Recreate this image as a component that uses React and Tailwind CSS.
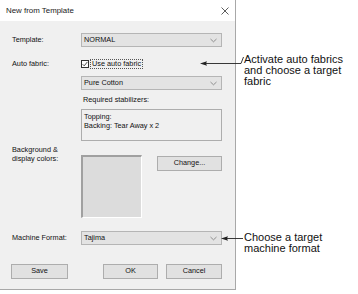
import React from "react";

const Chevron = () => (
  <svg width="7" height="5" viewBox="0 0 7 5" className="shrink-0">
    <polyline points="0.5,1 3.5,3.8 6.5,1" fill="none" stroke="#7a7a7a" strokeWidth="0.8" />
  </svg>
);

const Select = ({ value, className = "" }) => (
  <div className={`w-[141px] h-[14px] flex items-center justify-between pl-[2px] pr-[4px] bg-[#e3e3e3] border border-[#b5b5b5] ${className}`}>
    <span>{value}</span>
    <Chevron />
  </div>
);

const Button = ({ children, className = "" }) => (
  <div className={`h-[15px] flex items-center justify-center bg-[#e1e1e1] border border-[#adadad] ${className}`}>
    {children}
  </div>
);

export default function App() {
  return (
    <div className="relative w-[358px] h-[294px] bg-white overflow-hidden" style={{ fontFamily: '"Liberation Sans", Arial, sans-serif' }}>
      <div className="w-[236px] h-[290px] flex flex-col bg-[#f0f0f0] border-r border-b border-[#a8a8a8] text-[7.3px] text-[#111]">
        <div className="h-[21px] bg-white flex items-center justify-between pl-[6px] pr-[6px]">
          <span className="text-[7.9px] text-[#1a1a1a]">New from Template</span>
          <svg width="8" height="8" viewBox="0 0 8 8">
            <path d="M0.5 0.5 L7.5 7.5 M7.5 0.5 L0.5 7.5" stroke="#333" strokeWidth="0.8" />
          </svg>
        </div>
        <div className="flex flex-col pl-[12px]">
          <div className="flex items-center mt-[12px] h-[14px]">
            <div className="w-[69px]">Template:</div>
            <Select value="NORMAL" />
          </div>
          <div className="flex items-center mt-[12px] h-[10px]">
            <div className="w-[69px]">Auto fabric:</div>
            <div className="flex items-center">
              <div className="w-[8px] h-[8px] bg-white border border-[#333] flex items-center justify-center">
                <svg width="6" height="6" viewBox="0 0 6 6">
                  <polyline points="0.6,3.2 2.2,4.8 5.4,0.9" fill="none" stroke="#222" strokeWidth="0.8" />
                </svg>
              </div>
              <div className="ml-[1px] px-[1px] h-[10px] flex items-center border border-dotted border-[#555]">Use auto fabric</div>
            </div>
          </div>
          <div className="flex mt-[7px]">
            <div className="w-[69px]" />
            <div className="flex flex-col">
              <Select value="Pure Cotton" />
              <div className="mt-[6px] pl-[2px] h-[8px] flex items-center">Required stabilizers:</div>
              <div className="mt-[5px] w-[141px] h-[32px] border border-[#adadad] pl-[2px] pt-[2px] leading-[9px]">
                <div>Topping:</div>
                <div>Backing: Tear Away x 2</div>
              </div>
            </div>
          </div>
          <div className="flex mt-[14px]">
            <div className="w-[69px] leading-[9px] -mt-[10px]">
              <div>Background &amp;</div>
              <div>display colors:</div>
            </div>
            <div className="w-[61px] h-[63px] bg-[#dcdcdc] border-t-2 border-l-2 border-t-[#a0a0a0] border-l-[#a0a0a0] border-b border-r border-b-white border-r-white" />
            <Button className="ml-[15px] mt-[1px] w-[65px]">Change...</Button>
          </div>
          <div className="flex items-center mt-[13px] h-[14px]">
            <div className="w-[69px]">Machine Format:</div>
            <Select value="Tajima" />
          </div>
          <div className="flex items-center mt-[19px]">
            <Button className="w-[57px] -ml-[1px]">Save</Button>
            <Button className="w-[55px] ml-[35px] border-[#0078d7]">OK</Button>
            <Button className="w-[56px] ml-[8px]">Cancel</Button>
          </div>
        </div>
      </div>

      <div className="absolute left-[244px] top-[54px] text-[11px] leading-[11px] text-[#111]">
        <div>Activate auto fabrics</div>
        <div>and choose a target</div>
        <div>fabric</div>
      </div>
      <div className="absolute left-[244px] top-[232px] text-[11px] leading-[11px] text-[#111]">
        <div>Choose a target</div>
        <div>machine format</div>
      </div>

      <svg className="absolute left-0 top-0" width="358" height="294" viewBox="0 0 358 294">
        <polyline points="205,63.5 241,63.5 243.5,57" fill="none" stroke="#222" strokeWidth="0.9" />
        <polygon points="200,63.5 207,61.3 206,63.5 207,65.7" fill="#222" />
        <line x1="226" y1="238.5" x2="243" y2="238.5" stroke="#222" strokeWidth="0.9" />
        <polygon points="221,238.5 228,236.3 227,238.5 228,240.7" fill="#222" />
      </svg>
    </div>
  );
}
